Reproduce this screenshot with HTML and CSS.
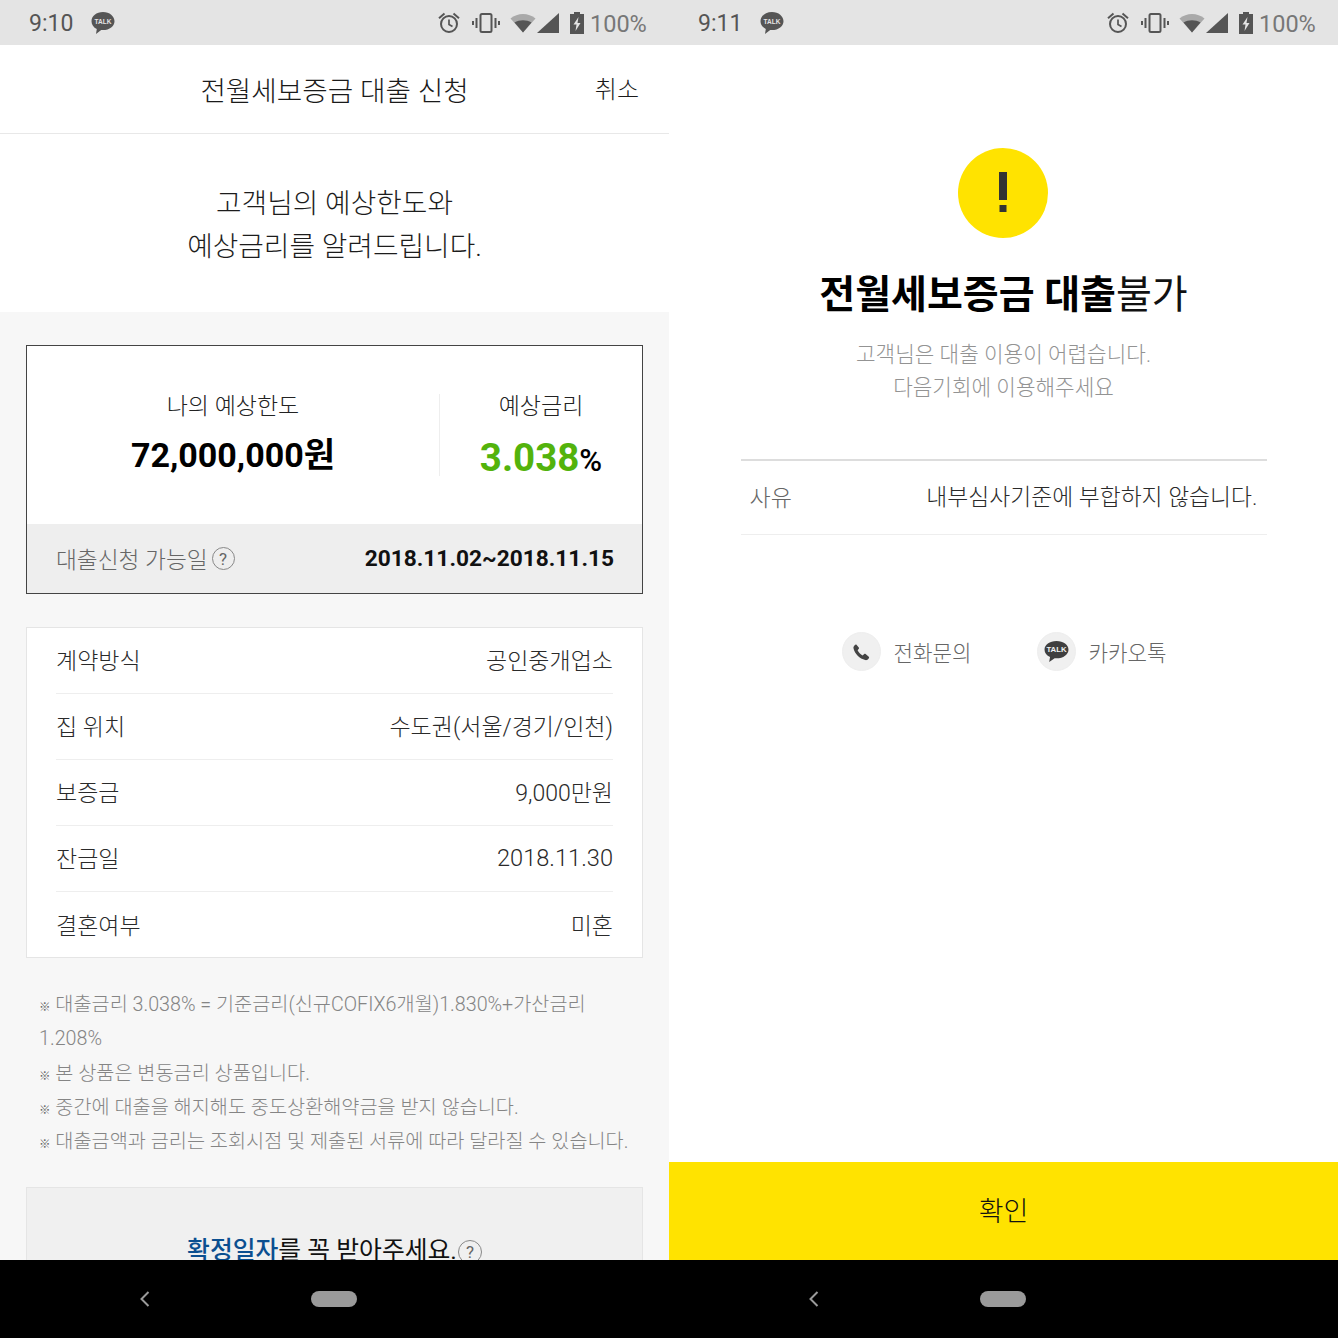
FILE: index.html
```html
<!DOCTYPE html>
<html lang="ko">
<head>
<meta charset="utf-8">
<title>전월세보증금 대출</title>
<link rel="stylesheet" href="styles.css">
</head>
<body>
<svg class="defs" width="0" height="0" aria-hidden="true">
  <symbol id="i-alarm" viewBox="0 0 24 24"><circle cx="12" cy="13" r="8" fill="none" stroke="currentColor" stroke-width="2"/><path d="M12 8.5V13.5L15.5 15.5" fill="none" stroke="currentColor" stroke-width="1.7"/><path d="M7.5 2.6L2 7.2 M16.5 2.6L22 7.2" fill="none" stroke="currentColor" stroke-width="2"/></symbol>
  <symbol id="i-vib" viewBox="0 0 28 20"><rect x="8.5" y="1" width="11" height="18" rx="1.5" fill="none" stroke="currentColor" stroke-width="2"/><path d="M4.5 5v10M1 8v4M23.5 5v10M27 8v4" fill="none" stroke="currentColor" stroke-width="2"/></symbol>
</svg>

<div class="phones">
  <section class="screen">
    <div class="status">
      <span class="clock">9:10</span>
      <svg class="talk-dot" viewBox="0 0 24 24"><path d="M12 1C5.4 1 0.5 5 0.5 10.2c0 3.4 2.1 6.2 5.3 7.8L5 23l5.2-4c.6.1 1.2.1 1.8.1 6.6 0 11.5-4 11.5-8.9S18.600 1 12 1z" fill="#555"/><text x="12" y="13" class="talk-text">TALK</text></svg>
      <span class="status-right">
        <svg class="st-alarm"><use href="#i-alarm"/></svg>
        <svg class="st-vib"><use href="#i-vib"/></svg>
        <svg class="st-wifi" viewBox="0 0 26 20"><path d="M0.500 5.500C7.500 -0.500 18.500 -0.500 25.500 5.500L13 19.500z" fill="#a9a9a9"/><path d="M4.500 9.500C9.500 6.500 16.500 6.500 21.500 9.500L13 19.500z" fill="#555"/></svg>
        <svg class="st-signal" viewBox="0 0 22 20"><path d="M0 20L22 0V20z" fill="#555"/></svg>
        <svg class="st-batt" viewBox="0 0 14 22"><path d="M4 0h6v2h4v20H0V2h4z" fill="#555"/><path d="M8.500 5L3.500 12.500h3L5.500 19l5-8h-3z" fill="#e4e4e4"/></svg>
        <span class="pct">100%</span>
      </span>
    </div>

    <div class="body body-gray">
      <header class="apphead">
        <h1>전월세보증금 대출 신청</h1>
        <span class="cancel">취소</span>
      </header>
      <div class="intro">고객님의 예상한도와<br>예상금리를 알려드립니다.</div>
      <div class="gray">
        <div class="quote">
          <div class="quote-top">
            <div class="q-limit">
              <div class="q-label">나의 예상한도</div>
              <div class="q-amount">72,000,000원</div>
            </div>
            <div class="q-rate">
              <div class="q-label">예상금리</div>
              <div class="q-value"><em>3.038</em><span>%</span></div>
            </div>
          </div>
          <div class="quote-bottom">
            <span class="qb-label">대출신청 가능일<i class="help">?</i></span>
            <strong>2018.11.02~2018.11.15</strong>
          </div>
        </div>

        <div class="info">
          <div class="info-row"><span>계약방식</span><span>공인중개업소</span></div>
          <div class="info-row"><span>집 위치</span><span>수도권(서울/경기/인천)</span></div>
          <div class="info-row"><span>보증금</span><span>9,000만원</span></div>
          <div class="info-row"><span>잔금일</span><span class="date">2018.11.30</span></div>
          <div class="info-row"><span>결혼여부</span><span>미혼</span></div>
        </div>

        <div class="notes">
          <p><small>※</small> 대출금리 3.038% = 기준금리(신규COFIX6개월)1.830%+가산금리 1.208%</p>
          <p><small>※</small> 본 상품은 변동금리 상품입니다.</p>
          <p><small>※</small> 중간에 대출을 해지해도 중도상환해약금을 받지 않습니다.</p>
          <p><small>※</small> 대출금액과 금리는 조회시점 및 제출된 서류에 따라 달라질 수 있습니다.</p>
        </div>

        <div class="confirm-card"><b>확정일자</b>를 꼭 받아주세요.<i class="help">?</i></div>
      </div>
    </div>

    <nav class="navbar">
      <svg class="nav-back" viewBox="0 0 12 18"><path d="M9.500 2L2.500 9l7 7" fill="none" stroke="#9a9a9a" stroke-width="2"/></svg>
      <span class="nav-home"></span>
    </nav>
  </section>

  <section class="screen">
    <div class="status">
      <span class="clock">9:11</span>
      <svg class="talk-dot" viewBox="0 0 24 24"><path d="M12 1C5.4 1 0.5 5 0.5 10.2c0 3.4 2.1 6.2 5.3 7.8L5 23l5.2-4c.6.1 1.2.1 1.8.1 6.6 0 11.5-4 11.5-8.9S18.600 1 12 1z" fill="#555"/><text x="12" y="13" class="talk-text">TALK</text></svg>
      <span class="status-right">
        <svg class="st-alarm"><use href="#i-alarm"/></svg>
        <svg class="st-vib"><use href="#i-vib"/></svg>
        <svg class="st-wifi" viewBox="0 0 26 20"><path d="M0.500 5.500C7.500 -0.500 18.500 -0.500 25.500 5.500L13 19.500z" fill="#a9a9a9"/><path d="M4.500 9.500C9.500 6.500 16.500 6.500 21.500 9.500L13 19.500z" fill="#555"/></svg>
        <svg class="st-signal" viewBox="0 0 22 20"><path d="M0 20L22 0V20z" fill="#555"/></svg>
        <svg class="st-batt" viewBox="0 0 14 22"><path d="M4 0h6v2h4v20H0V2h4z" fill="#555"/><path d="M8.500 5L3.500 12.500h3L5.500 19l5-8h-3z" fill="#e4e4e4"/></svg>
        <span class="pct">100%</span>
      </span>
    </div>

    <div class="body body-white">
      <div class="result">
        <div class="alert-mark"><svg viewBox="0 0 10 40"><path d="M1 0h8v28H1zM1.500 33h7v7h-7z" fill="#333"/></svg></div>
        <h2><b>전월세보증금 대출</b>불가</h2>
        <p class="sub">고객님은 대출 이용이 어렵습니다.<br>다음기회에 이용해주세요</p>
        <div class="reason"><span>사유</span><span class="reason-v">내부심사기준에 부합하지 않습니다.</span></div>
        <div class="contacts">
          <div class="contact">
            <span class="c-icon"><svg viewBox="0 0 24 24"><path d="M6.600 3.500l3 3.500c.4.500.4 1 0 1.500L8.300 10.200c1 2.200 3.200 4.500 5.500 5.500l1.700-1.400c.5-.4 1-.4 1.500 0l3.500 3c.5.500.5 1 .1 1.500-1 1.500-2.500 2.400-4 2-6-1.300-11.600-7-12.800-12.800-.4-1.500.5-3 2-4 .5-.4 1-.4 1.300 0z" fill="#444"/></svg></span>
            <span>전화문의</span>
          </div>
          <div class="contact">
            <span class="c-icon"><svg class="c-talk" viewBox="0 0 24 24"><path d="M12 2C5.400 2 .5 5.600 .5 10.200c0 3 2.100 5.500 5.300 7L5 22l5.200-3.600c.6.100 1.200.1 1.800.1 6.600 0 11.500-3.700 11.500-8.300S18.600 2 12 2z" fill="#3f3f3f"/><text x="12" y="12.500" class="talk-text talk-text-c">TALK</text></svg></span>
            <span>카카오톡</span>
          </div>
        </div>
      </div>
      <button class="ok" type="button">확인</button>
    </div>

    <nav class="navbar">
      <svg class="nav-back" viewBox="0 0 12 18"><path d="M9.500 2L2.500 9l7 7" fill="none" stroke="#9a9a9a" stroke-width="2"/></svg>
      <span class="nav-home"></span>
    </nav>
  </section>
</div>
</body>
</html>
```
FILE: styles.css
```css
* { box-sizing: border-box; }
html, body { margin: 0; padding: 0; background: #fff; }
body { font-family: Roboto, "Noto Sans CJK KR", sans-serif; color: #222; font-weight: 300; }
.defs { display: block; height: 0; width: 0; }
p, h1, h2 { margin: 0; font-weight: inherit; }

.phones { display: grid; grid-template-columns: 669px 669px; width: 1338px; height: 1338px; overflow: hidden; }
.screen { display: flex; flex-direction: column; height: 1338px; min-width: 0; }

.status { height: 45px; flex: none; background: #e4e4e4; display: flex; align-items: center; padding: 2px 23px 0 29px; color: #555; }
.clock { font-size: 23px; font-weight: 400; width: 62px; }
.talk-dot { width: 24px; height: 24px; margin-top: -2px; }
.talk-text { font-family: "Liberation Sans", sans-serif; font-size: 6.500px; font-weight: 700; fill: #e4e4e4; text-anchor: middle; }
.talk-text-c { font-size: 7.500px; fill: #f0f0f0; }
.status-right { margin-left: auto; display: flex; align-items: center; margin-top: -2px; }
.st-alarm { width: 24px; height: 24px; margin-right: 11px; }
.st-vib { width: 28px; height: 20px; margin-right: 10px; }
.st-wifi { width: 26px; height: 20px; margin-right: 1px; }
.st-signal { width: 22px; height: 20px; margin-right: 11px; }
.st-batt { width: 14px; height: 22px; margin-right: 6px; }
.pct { font-size: 23.500px; font-weight: 400; color: #777; width: 56px; white-space: nowrap; margin-top: 2px; }

.body { flex: 1; min-height: 0; overflow: hidden; display: flex; flex-direction: column; }
.body-gray { background: #f7f7f7; }
.body-white { background: #fff; }

.apphead { height: 89px; flex: none; background: #fff; border-bottom: 1px solid #e8e8e8; display: flex; align-items: center; justify-content: center; position: relative; color: #1a1a1a; }
.apphead h1 { font-size: 27.700px; font-weight: 300; margin-bottom: 1px; }
.cancel { position: absolute; right: 30px; top: 28px; font-size: 24px; line-height: 34px; }

.intro { height: 178px; flex: none; background: #fff; text-align: center; font-size: 27.800px; line-height: 43px; padding-top: 48px; color: #1c1c1c; }

.gray { padding: 33px 26px 0; }

.quote { height: 249px; border: 1px solid #444; background: #fff; display: flex; flex-direction: column; }
.quote-top { flex: 1; display: flex; align-items: center; }
.q-limit { width: 413px; height: 82px; text-align: center; border-right: 1px solid #eee; }
.q-rate { flex: 1; height: 82px; text-align: center; }
.q-label { font-size: 23px; line-height: 26px; color: #222; }
.q-amount { font-size: 34px; line-height: 46px; font-weight: 700; color: #000; margin-top: 12px; white-space: nowrap; }
.q-value { line-height: 46px; margin-top: 15px; white-space: nowrap; }
.q-value em { font-style: normal; font-size: 38.500px; font-weight: 700; color: #53b30c; }
.q-value span { font-size: 31px; font-weight: 500; color: #000; }
.quote-bottom { height: 69px; flex: none; background: #eee; display: flex; align-items: center; justify-content: space-between; padding: 0 28px 0 29px; }
.qb-label { font-size: 22.700px; color: #666; display: flex; align-items: center; }
.quote-bottom strong { font-size: 22.700px; font-weight: 700; color: #111; }
.help { width: 23px; height: 23px; border: 1px solid #888; border-radius: 50%; display: inline-flex; align-items: center; justify-content: center; font-style: normal; font-size: 17px; font-weight: 400; color: #666; margin-left: 4px; flex: none; }

.info { margin-top: 33px; background: #fff; border: 1px solid #e5e5e5; height: 331px; padding: 0 29px; }
.info-row { height: 66px; display: flex; align-items: center; justify-content: space-between; font-size: 23px; border-bottom: 1px solid #eee; color: #2a2a2a; padding-bottom: 3px; }
.info-row:last-child { border-bottom: 0; }
.date { font-size: 23.600px; margin-top: 2px; }

.notes { margin-top: 30px; padding: 0 0 0 13px; font-size: 19.700px; line-height: 34.300px; color: #858585; }
.notes small { font-size: 11.500px; line-height: 0; font-weight: 400; color: #666; }

.confirm-card { margin-top: 28px; height: 160px; background: #f0f0f0; border: 1px solid #e5e5e5; text-align: center; padding-top: 44px; font-size: 24.800px; line-height: 38px; color: #111; font-weight: 400; }
.confirm-card b { color: #0b4f90; font-weight: 500; }
.confirm-card .help { vertical-align: 1px; margin-left: 1px; width: 24px; height: 24px; }

.navbar { height: 78px; flex: none; background: #000; display: flex; align-items: center; justify-content: center; position: relative; }
.nav-back { position: absolute; left: 139px; top: 30px; width: 12px; height: 18px; }
.nav-home { width: 46px; height: 16px; background: #9a9a9a; border-radius: 8px; margin-right: 1px; }

.result { flex: 1; min-height: 0; display: flex; flex-direction: column; align-items: center; padding-top: 103px; }
.alert-mark { width: 90px; height: 90px; border-radius: 50%; background: #ffe300; display: flex; align-items: center; justify-content: center; margin-right: 2px; }
.alert-mark svg { width: 10px; height: 40px; margin-bottom: 2px; }
.result h2 { margin-top: 28px; font-size: 39px; line-height: 58px; color: #111; font-weight: 400; white-space: nowrap; }
.result h2 b { font-weight: 700; color: #000; }
.sub { margin-top: 14px; font-size: 21.300px; line-height: 33px; color: #939393; text-align: center; }
.reason { margin-top: 55px; width: 526px; height: 76px; border-top: 2px solid #ddd; border-bottom: 1px solid #eee; display: flex; align-items: center; justify-content: space-between; padding: 0 9px 4px; font-size: 22.800px; color: #2a2a2a; }
.reason span:first-child { color: #666; font-size: 23px; }
.contacts { margin-top: 97px; display: flex; gap: 65px; margin-left: 1px; }
.contact { display: flex; align-items: center; gap: 13px; font-size: 21.200px; color: #666; }
.c-icon { width: 39px; height: 39px; border-radius: 50%; background: #f0f0f0; display: flex; align-items: center; justify-content: center; border: 1px solid #eee; }
.c-icon svg { width: 22px; height: 22px; }
.c-icon .c-talk { width: 25px; height: 25px; }
.ok { height: 98px; flex: none; width: 100%; border: 0; background: #ffe300; font-family: inherit; font-size: 27px; font-weight: 300; color: #111; padding: 0 0 4px; }
```
